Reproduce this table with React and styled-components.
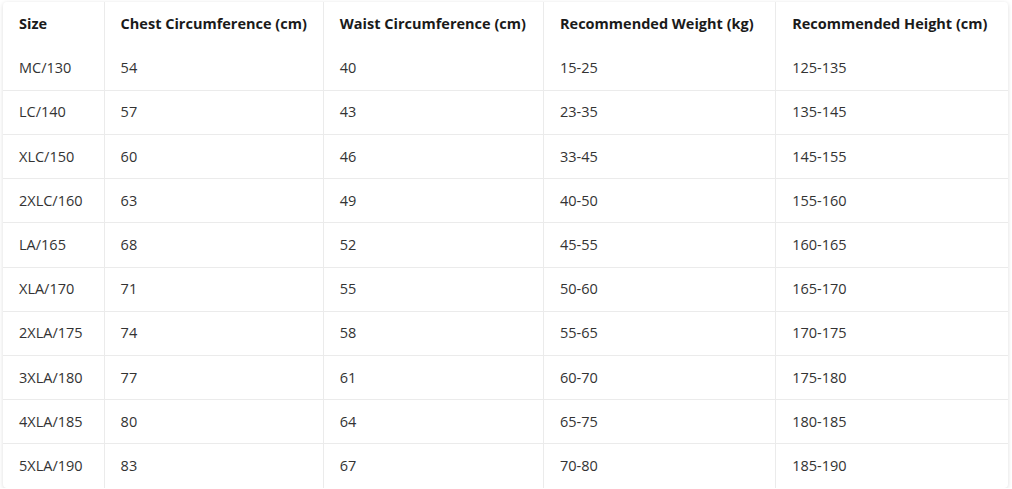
import React from "react";
import styled, { createGlobalStyle } from "styled-components";

const GlobalStyle = createGlobalStyle`
	body {
		margin: 0;
		background: #ffffff;
		font-family: "Open Sans", "Noto Sans", "Liberation Sans", sans-serif;
	}
`;

const columns = [
	{ key: "size", label: "Size", width: 101 },
	{ key: "chest", label: "Chest Circumference (cm)", width: 219 },
	{ key: "waist", label: "Waist Circumference (cm)", width: 220 },
	{ key: "weight", label: "Recommended Weight (kg)", width: 232 },
	{ key: "height", label: "Recommended Height (cm)", width: 232 }
];

const rows = [
	["MC/130", "54", "40", "15-25", "125-135"],
	["LC/140", "57", "43", "23-35", "135-145"],
	["XLC/150", "60", "46", "33-45", "145-155"],
	["2XLC/160", "63", "49", "40-50", "155-160"],
	["LA/165", "68", "52", "45-55", "160-165"],
	["XLA/170", "71", "55", "50-60", "165-170"],
	["2XLA/175", "74", "58", "55-65", "170-175"],
	["3XLA/180", "77", "61", "60-70", "175-180"],
	["4XLA/185", "80", "64", "65-75", "180-185"],
	["5XLA/190", "83", "67", "70-80", "185-190"]
];

const Card = styled.div`
	margin: 2px 4px 0 3px;
	width: 1005px;
	background: #ffffff;
	border-radius: 4px;
	box-shadow: 0 1px 4px rgba(0, 0, 0, 0.14);
	overflow: hidden;
`;

const Table = styled.table`
	width: 100%;
	border-collapse: collapse;
	table-layout: fixed;
	font-size: 14.5px;
	color: #333333;
`;

const Cell = styled.td`
	height: 44.2px;
	padding: 0 16px;
	box-sizing: border-box;
	line-height: 20px;
	text-align: left;
	border-bottom: 1px solid #ebebeb;
	border-right: 1px solid #ebebeb;
	white-space: nowrap;
	&:last-child {
		border-right: none;
	}
	tr:last-child > & {
		border-bottom: none;
	}
`;

const HeadCell = styled(Cell).attrs({ as: "th" })`
	font-weight: 700;
	color: #1a1a1a;
`;

export default function App() {
	return (
		<>
			<GlobalStyle />
			<Card>
				<Table>
					<colgroup>
						{columns.map(col => (
							<col key={col.key} style={{ width: col.width }} />
						))}
					</colgroup>
					<thead>
						<tr>
							{columns.map(col => (
								<HeadCell key={col.key}>{col.label}</HeadCell>
							))}
						</tr>
					</thead>
					<tbody>
						{rows.map(row => (
							<tr key={row[0]}>
								{row.map((value, i) => (
									<Cell key={columns[i].key}>{value}</Cell>
								))}
							</tr>
						))}
					</tbody>
				</Table>
			</Card>
		</>
	);
}
